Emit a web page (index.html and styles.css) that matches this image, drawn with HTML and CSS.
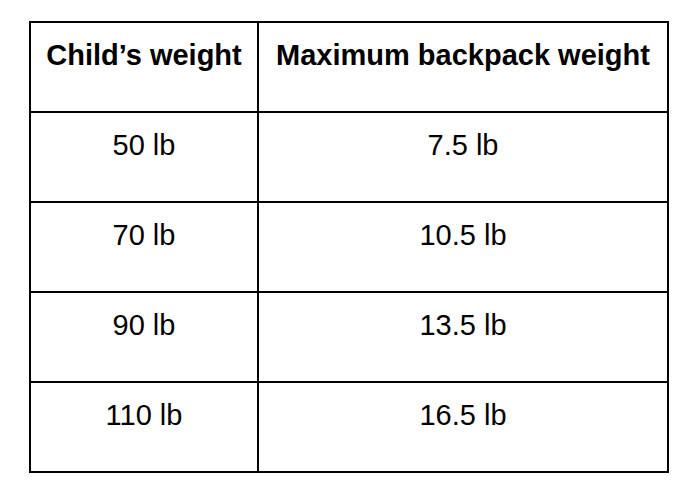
FILE: index.html
```html
<!DOCTYPE html>
<html lang="en">
<head>
<meta charset="utf-8">
<title>Backpack weight</title>
<link rel="stylesheet" href="styles.css">
</head>
<body>
<div class="weight-table" role="table">
  <div class="cell head" role="columnheader">Child’s weight</div>
  <div class="cell head" role="columnheader">Maximum backpack weight</div>
  <div class="cell" role="cell">50 lb</div>
  <div class="cell" role="cell">7.5 lb</div>
  <div class="cell" role="cell">70 lb</div>
  <div class="cell" role="cell">10.5 lb</div>
  <div class="cell" role="cell">90 lb</div>
  <div class="cell" role="cell">13.5 lb</div>
  <div class="cell" role="cell">110 lb</div>
  <div class="cell" role="cell">16.5 lb</div>
</div>
</body>
</html>
```
FILE: styles.css
```css
html, body {
  margin: 0;
  background: #fff;
}
body {
  padding: 21px 0 0 29px;
  font-family: "Liberation Sans", Arial, sans-serif;
  color: #000;
}
.weight-table {
  display: grid;
  grid-template-columns: 226px 408px;
  grid-auto-rows: 88px;
  gap: 2px;
  padding: 2px;
  width: max-content;
  background: #000;
}
.cell {
  background: #fff;
  text-align: center;
  font-size: 29px;
  line-height: 33px;
  padding-top: 16px;
  box-sizing: border-box;
}
.head {
  font-weight: bold;
}
```
